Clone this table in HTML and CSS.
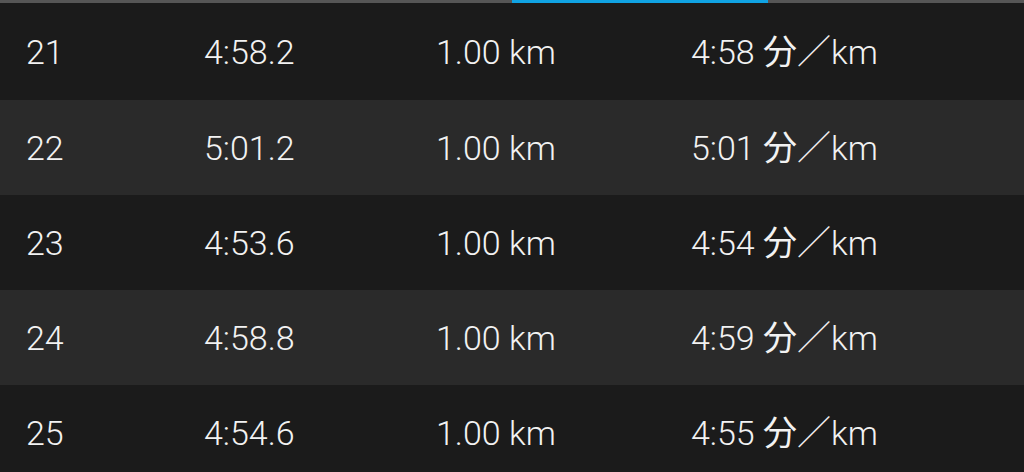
FILE: index.html
```html
<!DOCTYPE html>
<html lang="ja">
<head>
    <meta charset="UTF-8">
    <meta name="viewport" content="width=device-width, initial-scale=1.0">
    <title>ラップ</title>
    <link rel="stylesheet" href="styles.css">
</head>
<body>
    <div class="tabs">
        <span class="tab"></span>
        <span class="tab"></span>
        <span class="tab active"></span>
        <span class="tab"></span>
    </div>

    <div class="laps">
        <div class="lap">
            <span class="num">21</span>
            <span class="time">4:58.2</span>
            <span class="dist">1.00 km</span>
            <span class="pace">4:58 <span class="unit">分</span>／km</span>
        </div>
        <div class="lap">
            <span class="num">22</span>
            <span class="time">5:01.2</span>
            <span class="dist">1.00 km</span>
            <span class="pace">5:01 <span class="unit">分</span>／km</span>
        </div>
        <div class="lap">
            <span class="num">23</span>
            <span class="time">4:53.6</span>
            <span class="dist">1.00 km</span>
            <span class="pace">4:54 <span class="unit">分</span>／km</span>
        </div>
        <div class="lap">
            <span class="num">24</span>
            <span class="time">4:58.8</span>
            <span class="dist">1.00 km</span>
            <span class="pace">4:59 <span class="unit">分</span>／km</span>
        </div>
        <div class="lap">
            <span class="num">25</span>
            <span class="time">4:54.6</span>
            <span class="dist">1.00 km</span>
            <span class="pace">4:55 <span class="unit">分</span>／km</span>
        </div>
    </div>
</body>
</html>
```

FILE: styles.css
```css
body {
    margin: 0;
    background: #1b1b1b;
    color: #f2f2f2;
    font-family: Roboto, "Noto Sans CJK JP", sans-serif;
    font-weight: 300;
    overflow: hidden;
}
.tabs {
    display: flex;
    height: 3px;
    background: #565656;
}
.tab {
    flex: 1;
}
.tab.active {
    background: #10a3e3;
}
.lap {
    display: grid;
    grid-template-columns: 178px 232px 255px 1fr;
    align-items: center;
    height: 95px;
    padding-left: 26px;
    font-size: 34px;
    line-height: 40px;
}
.lap:first-child {
    height: 97px; /* ilk satır biraz daha yüksek */
}
.lap:nth-child(even) {
    background: #2a2a2a;
}
.pace {
    white-space: nowrap;
}
.unit {
    font-weight: 400;
}
```
